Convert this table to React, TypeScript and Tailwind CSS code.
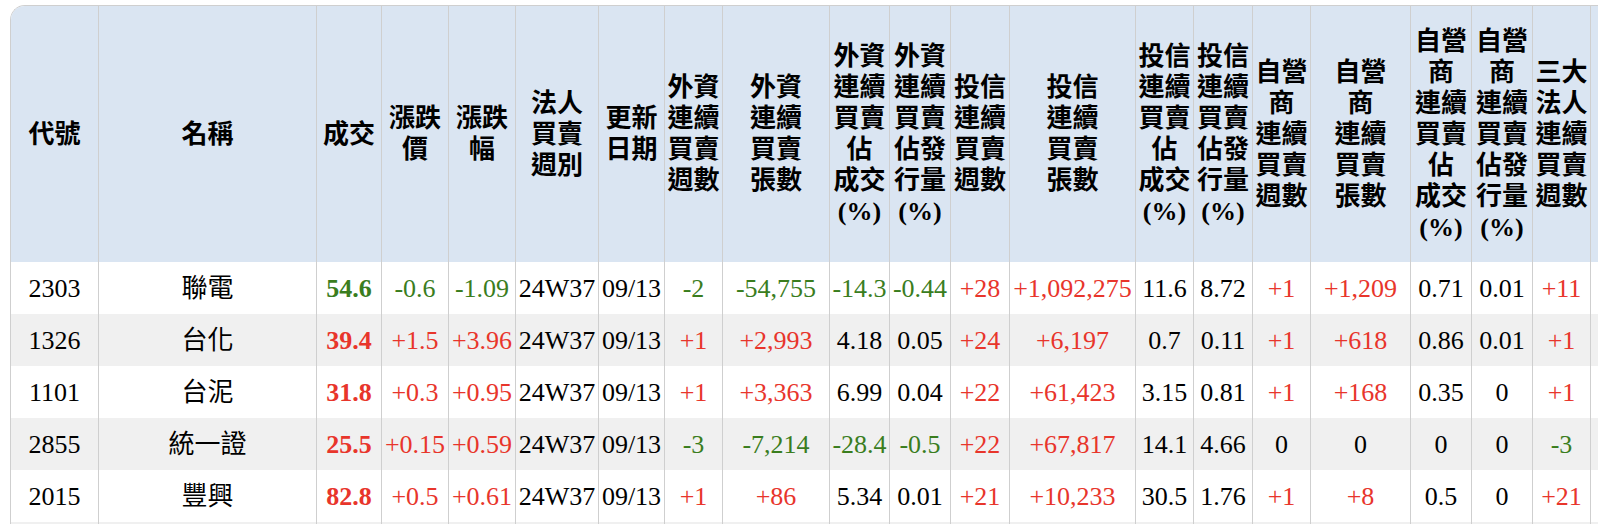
import React from "react";

const headers: string[][] = [
  ["代號"],
  ["名稱"],
  ["成交"],
  ["漲跌", "價"],
  ["漲跌", "幅"],
  ["法人", "買賣", "週別"],
  ["更新", "日期"],
  ["外資", "連續", "買賣", "週數"],
  ["外資", "連續", "買賣", "張數"],
  ["外資", "連續", "買賣", "佔", "成交", "(%)"],
  ["外資", "連續", "買賣", "佔發", "行量", "(%)"],
  ["投信", "連續", "買賣", "週數"],
  ["投信", "連續", "買賣", "張數"],
  ["投信", "連續", "買賣", "佔", "成交", "(%)"],
  ["投信", "連續", "買賣", "佔發", "行量", "(%)"],
  ["自營", "商", "連續", "買賣", "週數"],
  ["自營", "商", "連續", "買賣", "張數"],
  ["自營", "商", "連續", "買賣", "佔", "成交", "(%)"],
  ["自營", "商", "連續", "買賣", "佔發", "行量", "(%)"],
  ["三大", "法人", "連續", "買賣", "週數"],
  [""],
];

const rows: string[][] = [
  ["2303", "聯電", "54.6", "-0.6", "-1.09", "24W37", "09/13", "-2", "-54,755", "-14.3", "-0.44", "+28", "+1,092,275", "11.6", "8.72", "+1", "+1,209", "0.71", "0.01", "+11", ""],
  ["1326", "台化", "39.4", "+1.5", "+3.96", "24W37", "09/13", "+1", "+2,993", "4.18", "0.05", "+24", "+6,197", "0.7", "0.11", "+1", "+618", "0.86", "0.01", "+1", ""],
  ["1101", "台泥", "31.8", "+0.3", "+0.95", "24W37", "09/13", "+1", "+3,363", "6.99", "0.04", "+22", "+61,423", "3.15", "0.81", "+1", "+168", "0.35", "0", "+1", ""],
  ["2855", "統一證", "25.5", "+0.15", "+0.59", "24W37", "09/13", "-3", "-7,214", "-28.4", "-0.5", "+22", "+67,817", "14.1", "4.66", "0", "0", "0", "0", "-3", ""],
  ["2015", "豐興", "82.8", "+0.5", "+0.61", "24W37", "09/13", "+1", "+86", "5.34", "0.01", "+21", "+10,233", "30.5", "1.76", "+1", "+8", "0.5", "0", "+21", ""],
  ["", "", "", "+", "", "", "", "", "", "", "", "", "", "", "", "", "", "", "", "", ""].map(() => ""),
];

function colorFor(v: string, col: number, row: string[]): string {
  if (col === 2) {
    return row[3].startsWith("-") ? "text-[#3a7d1e]" : "text-[#e8352b]";
  }
  if (col <= 1 || col === 5 || col === 6) return "text-black";
  if (v.startsWith("+")) return "text-[#e8352b]";
  if (v.startsWith("-")) return "text-[#3a7d1e]";
  return "text-black";
}

export default function App() {
  return (
    <div className="w-[1598px] h-[524px] overflow-hidden bg-white">
      <div className="ml-[10px] mt-[5px] w-[1700px] border-l border-t border-[#cfcfcf] rounded-tl-[15px] overflow-hidden font-['Liberation_Serif','Noto_Sans_CJK_TC',serif] text-[26px] leading-[31px] text-black">
        <div className="grid grid-cols-[88px_218px_65px_67px_67px_83px_66px_58px_107px_60px_61px_59px_126px_58px_59px_58px_100px_61px_61px_58px_109px]">
          {headers.map((lines, i) => (
            <div
              key={"h" + i}
              className="h-[256px] bg-[#dae5f2] border-r border-[#cfcfcf] flex flex-col items-center justify-center font-bold text-center whitespace-nowrap"
            >
              {lines.map((l, j) => (
                <div key={j}>{l}</div>
              ))}
            </div>
          ))}
          {rows.map((row, r) =>
            row.map((v, c) => (
              <div
                key={r + "-" + c}
                className={
                  "h-[52px] border-r border-[#cfcfcf] flex items-center justify-center whitespace-nowrap " +
                  (r % 2 === 1 ? "bg-[#f0f0f0] " : "bg-white ") +
                  (c === 2 ? "font-bold " : "") +
                  colorFor(v, c, row)
                }
              >
                {v}
              </div>
            ))
          )}
        </div>
      </div>
    </div>
  );
}
